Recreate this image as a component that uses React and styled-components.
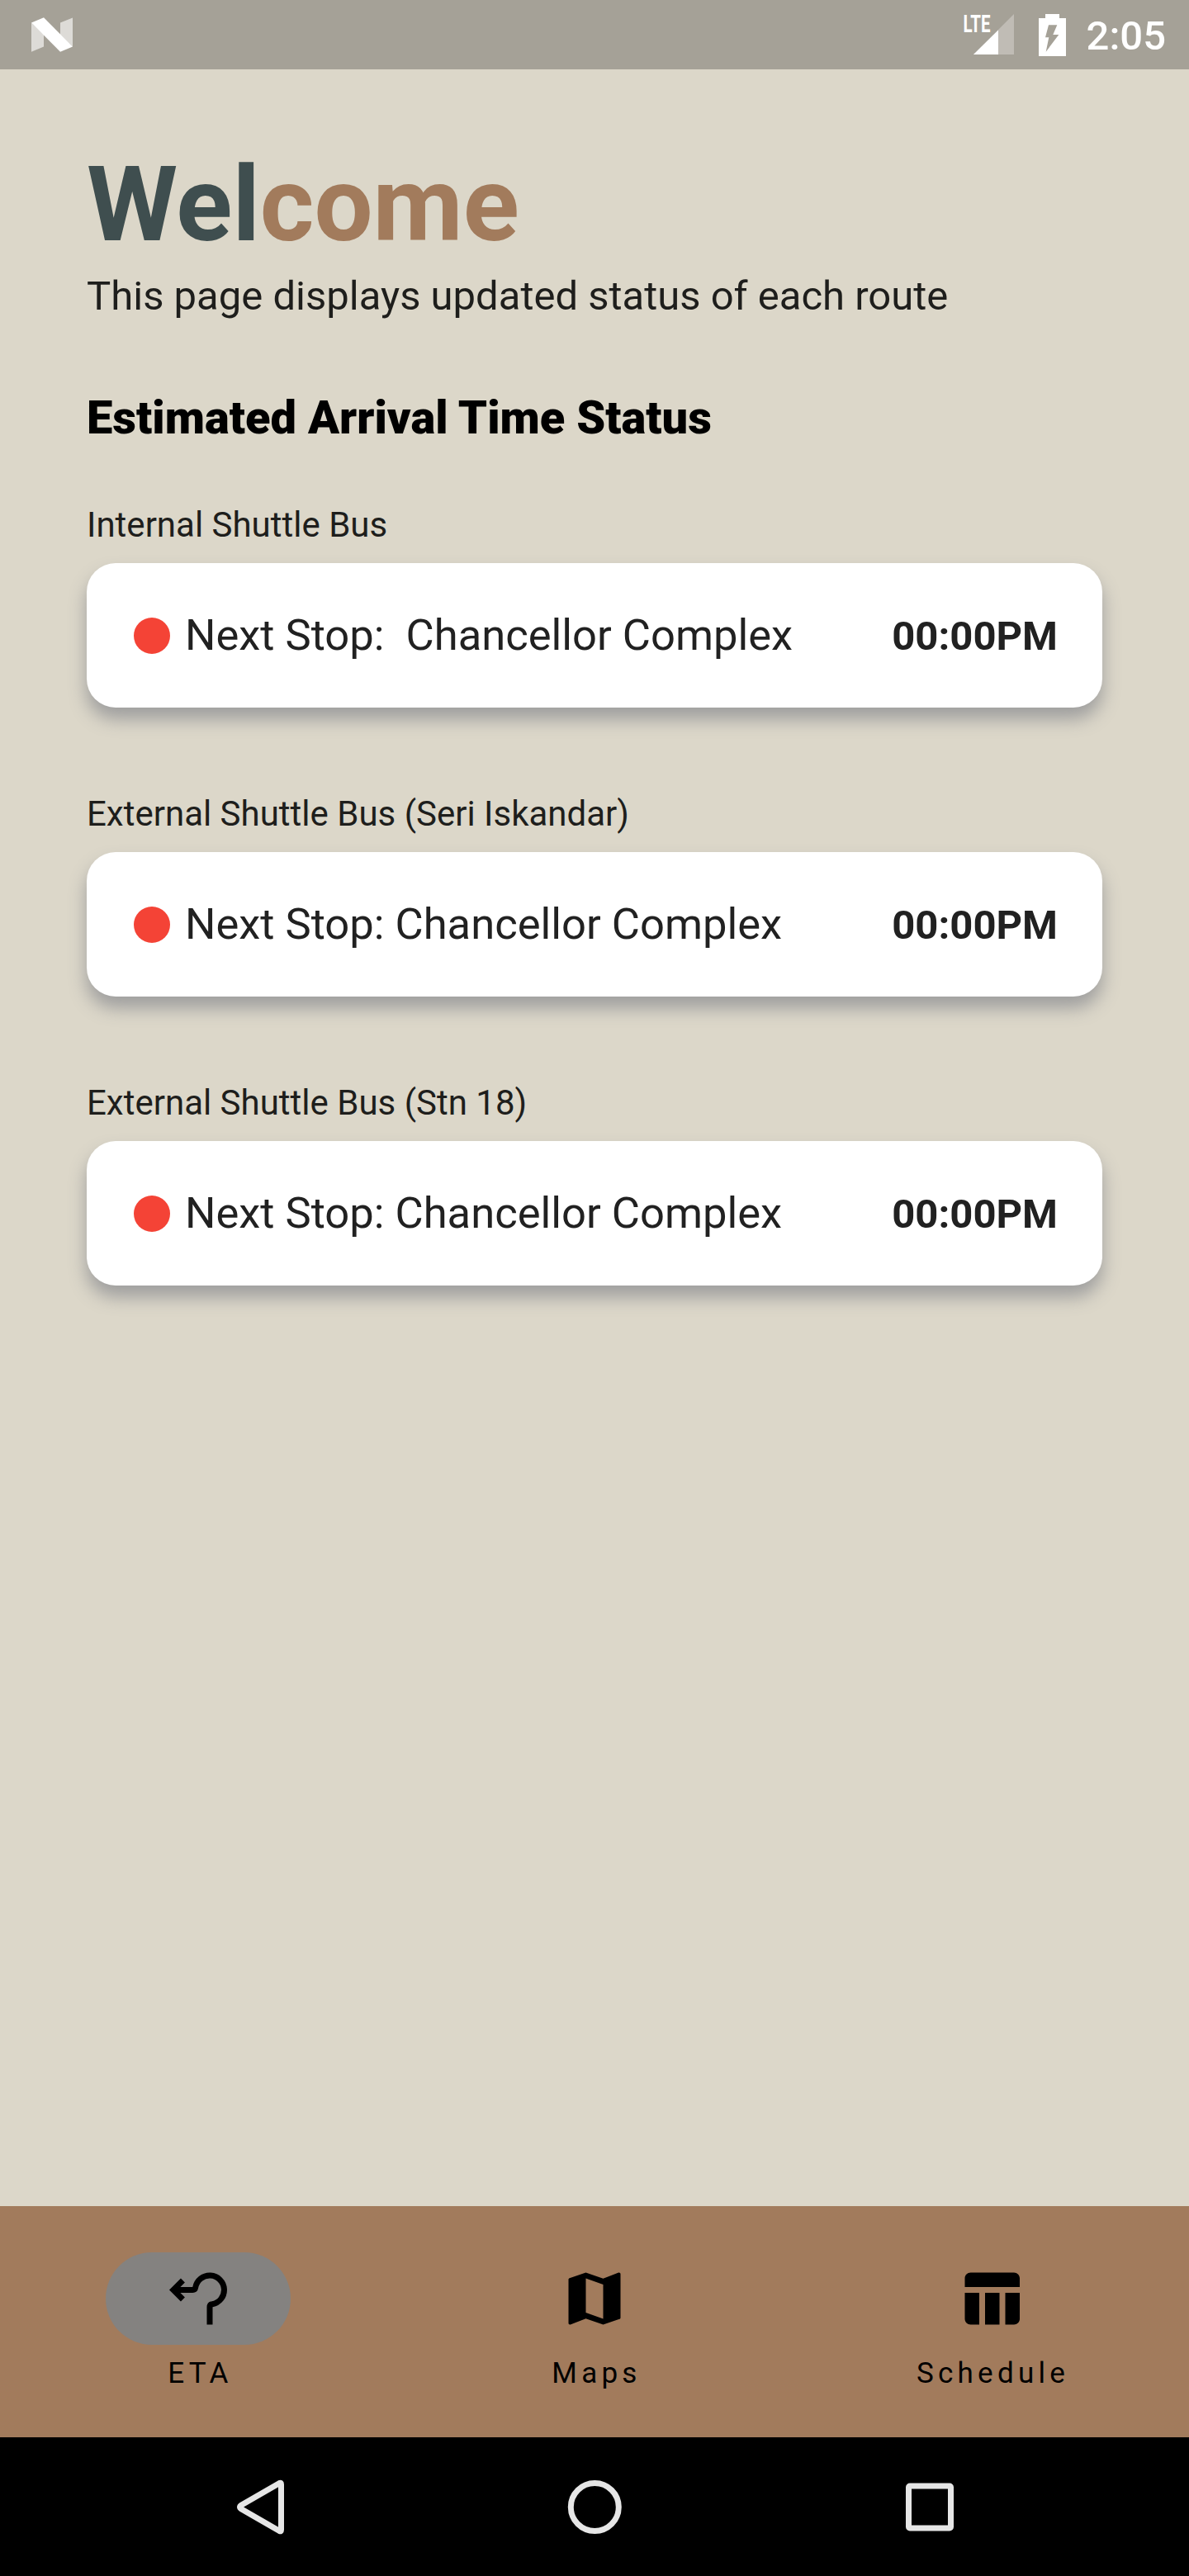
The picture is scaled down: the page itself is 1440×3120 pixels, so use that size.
import React from "react";
import styled, { createGlobalStyle } from "styled-components";

const GlobalStyle = createGlobalStyle`
  * { box-sizing: border-box; }
  body { margin: 0; background: #dcd7c9; }
`;

const Screen = styled.div`
  width: 1440px;
  height: 3120px;
  display: flex;
  flex-direction: column;
  overflow: hidden;
  background: #dcd7c9;
  color: #1e1e1c;
  font-family: Roboto, "Liberation Sans", sans-serif;
`;

const StatusBar = styled.header`
  flex: none;
  height: 84px;
  padding: 0 28px 0 38px;
  display: flex;
  align-items: center;
  background: #a5a197;
  color: #fff;
`;

const StatusIcons = styled.div`
  margin-left: auto;
  display: flex;
  align-items: center;
`;

const Glyph = styled.svg`
  display: block;
  flex: none;
  margin-right: ${(p) => p.$after || 0}px;
`;

const Clock = styled.span`
  font-size: 49px;
  line-height: 58px;
  font-weight: 500;
  padding-top: 4px;
`;

const Content = styled.main`
  flex: 1;
  padding: 89.5px 105px 0;
`;

const Title = styled.h1`
  margin: 0;
  font-size: 126px;
  line-height: 148px;
  font-weight: 700;
  color: #3f4e4f;
`;

const Accent = styled.span`
  color: #a27b5c;
`;

const Subtitle = styled.p`
  margin: 8px 0 0;
  font-size: 49px;
  line-height: 57px;
`;

const Heading = styled.h2`
  margin: 86.5px 0 73px;
  font-size: 56px;
  line-height: 66px;
  font-weight: 900;
  color: #000;
`;

const Routes = styled.div`
  display: flex;
  flex-direction: column;
  gap: 105px;
`;

const Route = styled.section`
  display: flex;
  flex-direction: column;
  gap: 22px;
`;

const RouteName = styled.div`
  font-size: 42px;
  line-height: 48px;
`;

const Card = styled.div`
  height: 175px;
  padding: 0 54px 0 57px;
  display: flex;
  align-items: center;
  border-radius: 35px;
  background: #fff;
  color: #212121;
  box-shadow: 0 14px 21px #9e9e9e;
`;

const Dot = styled.span`
  width: 44px;
  height: 44px;
  margin-right: 18px;
  border-radius: 50%;
  background: #f44336;
`;

const Stop = styled.span`
  font-size: 52.5px;
  line-height: 61px;
  white-space: pre;
`;

const Time = styled.span`
  margin-left: auto;
  padding-top: 2px;
  font-size: 49px;
  line-height: 58px;
  font-weight: 700;
`;

const TabBar = styled.nav`
  flex: none;
  height: 280px;
  padding-top: 56px;
  display: flex;
  background: #a27b5c;
  color: #000;
`;

const Tab = styled.div`
  flex: 1;
  display: flex;
  flex-direction: column;
  align-items: center;
`;

const Indicator = styled.div`
  width: 224px;
  height: 112px;
  display: grid;
  place-items: center;
  border-radius: 56px;
  background: ${(p) => (p.$active ? "#848280" : "transparent")};
`;

const TabLabel = styled.span`
  margin-top: 14px;
  padding-left: 5px;
  font-size: 35px;
  line-height: 41px;
  letter-spacing: 5.25px;
`;

const SystemBar = styled.footer`
  flex: none;
  height: 168px;
  padding: 0 273px;
  display: flex;
  align-items: center;
  justify-content: space-between;
  background: #000;
`;

const routes = [
  { name: "Internal Shuttle Bus", stop: "Next Stop:  Chancellor Complex", time: "00:00PM" },
  { name: "External Shuttle Bus (Seri Iskandar)", stop: "Next Stop: Chancellor Complex", time: "00:00PM" },
  { name: "External Shuttle Bus (Stn 18)", stop: "Next Stop: Chancellor Complex", time: "00:00PM" },
];

const tabs = [
  {
    label: "ETA",
    active: true,
    icon: (
      <g fill="none" stroke="currentColor" strokeWidth="2">
        <path d="M6.7 5.7 3.41 9l3.29 3.3" />
        <path d="M4 9h6.1c.5 0 .88-.37.97-.87A5 5 0 1 1 16.86 13.93C16.3 14 16 14.4 16 15v6" />
      </g>
    ),
  },
  {
    label: "Maps",
    icon: (
      <path
        fill="currentColor"
        d="M20.5 3l-.16.03L15 5.1 9 3 3.36 4.9c-.21.07-.36.25-.36.48V20.5c0 .28.22.5.5.5l.16-.03L9 18.9l6 2.1 5.64-1.9c.21-.07.36-.25.36-.48V3.5c0-.28-.22-.5-.5-.5zM15 19l-6-2.11V5l6 2.11V19z"
      />
    ),
  },
  {
    label: "Schedule",
    icon: (
      <path
        fill="currentColor"
        d="M10 10.02h5V21h-5zM17 21h3c1.1 0 2-.9 2-2v-9h-5v11zM20 3H5c-1.1 0-2 .9-2 2v3h19V5c0-1.1-.9-2-2-2zM3 19c0 1.1.9 2 2 2h3V10H3v9z"
      />
    ),
  },
];

export default function App() {
  return (
    <Screen>
      <GlobalStyle />
      <StatusBar>
        <Glyph width="50" height="42" viewBox="0 0 50 42">
          <path fill="#dddbd7" d="M0 6.5 15 21v14.5L0 41.8zM35 6.5 50 .5v35L35 21z" />
          <path fill="#fff" d="M0 6.5 15 .3 50 35.5 35 41.8z" />
        </Glyph>
        <StatusIcons>
          <Glyph width="64" height="60" viewBox="0 0 64 60" $after={29}>
            <path fill="#c0bcb5" d="M63 5v49H14z" />
            <path fill="#fff" d="M44 24.5V54H14z" />
            <text
              x="1.5"
              y="27"
              fill="#fff"
              fontSize="29.5"
              fontWeight="700"
              textLength="33"
              lengthAdjust="spacingAndGlyphs"
            >
              LTE
            </text>
          </Glyph>
          <Glyph width="33" height="51" viewBox="0 0 33 51" $after={25}>
            <path
              fill="#fff"
              fillRule="evenodd"
              d="M8 0h17v5h8v46H0V5h8zM12 13.300 8 28.300h4.300L8.700 45.700 24.300 25H17.300L22.300 13.300z"
            />
          </Glyph>
          <Clock>2:05</Clock>
        </StatusIcons>
      </StatusBar>
      <Content>
        <Title>
          Wel<Accent>come</Accent>
        </Title>
        <Subtitle>This page displays updated status of each route</Subtitle>
        <Heading>Estimated Arrival Time Status</Heading>
        <Routes>
          {routes.map((r) => (
            <Route key={r.name}>
              <RouteName>{r.name}</RouteName>
              <Card>
                <Dot />
                <Stop>{r.stop}</Stop>
                <Time>{r.time}</Time>
              </Card>
            </Route>
          ))}
        </Routes>
      </Content>
      <TabBar>
        {tabs.map((t) => (
          <Tab key={t.label}>
            <Indicator $active={t.active}>
              <Glyph width="84" height="84" viewBox="0 0 24 24">
                {t.icon}
              </Glyph>
            </Indicator>
            <TabLabel>{t.label}</TabLabel>
          </Tab>
        ))}
      </TabBar>
      <SystemBar>
        <Glyph width="84" height="84" viewBox="0 0 84 84">
          <path
            d="M65.500 13.500Q67.500 12.500 67.500 15V70Q67.500 72.500 65.500 71.500L19.500 45Q15.500 42.500 19.500 40Z"
            fill="none"
            stroke="#e6e6e6"
            strokeWidth="7"
            strokeLinejoin="round"
          />
        </Glyph>
        <Glyph width="84" height="84" viewBox="0 0 84 84">
          <circle cx="42.3" cy="42.500" r="29" fill="none" stroke="#e6e6e6" strokeWidth="7" />
        </Glyph>
        <Glyph width="84" height="84" viewBox="0 0 84 84">
          <rect x="17.500" y="17" width="51" height="51" rx="1.500" fill="none" stroke="#e6e6e6" strokeWidth="7" />
        </Glyph>
      </SystemBar>
    </Screen>
  );
}
